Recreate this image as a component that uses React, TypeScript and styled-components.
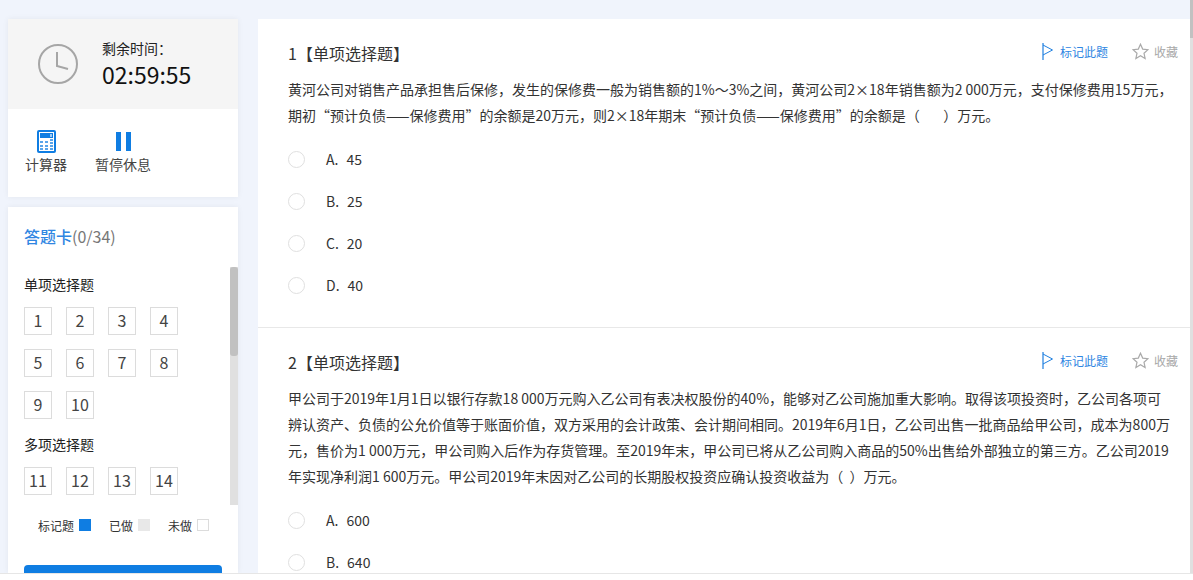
import React from "react";
import styled, { createGlobalStyle } from "styled-components";

const GlobalStyle = createGlobalStyle`
  html, body { margin: 0; padding: 0; height: 100%; overflow: hidden; }
  body {
    font-family: "Noto Sans CJK SC", "Noto Sans", sans-serif;
    font-size: 14px;
    color: #333;
  }
`;

const Page = styled.div`
  width: 1193px;
  height: 580px;
  display: flex;
  flex-direction: column;
  background: #fff;
  overflow: hidden;
`;

const Viewport = styled.div`
  height: 573px;
  flex: none;
  display: flex;
  background: #f0f4fc;
  overflow: hidden;
`;

const BottomLine = styled.div`
  flex: 1;
  border-top: 1px solid #e6e6e6;
`;

const Sidebar = styled.aside`
  width: 230px;
  flex: none;
  margin: 19px 0 0 8px;
  display: flex;
  flex-direction: column;
  gap: 10px;
`;

const Card = styled.section`
  background: #fff;
  box-shadow: 0 0 6px rgba(0, 0, 0, 0.06);
`;

const AnswerCard = styled(Card)`
  flex: 1;
  overflow: hidden;
`;

const TimerBox = styled.div`
  height: 90px;
  background: #f5f5f5;
  display: flex;
  align-items: center;
  padding-left: 30px;
  gap: 24px;
`;

const TimerText = styled.div`
  display: flex;
  flex-direction: column;
  color: #222;
  margin-top: -3px;
`;

const TimerLabel = styled.span`
  font-size: 14px;
  line-height: 22px;
`;

const TimerValue = styled.span`
  font-size: 23px;
  line-height: 30px;
  color: #111;
`;

const Tools = styled.div`
  height: 88px;
  display: flex;
  gap: 28px;
  padding: 21px 0 0 17px;
  box-sizing: border-box;
`;

const Tool = styled.div`
  display: flex;
  flex-direction: column;
  align-items: center;
  font-size: 14px;
  line-height: 22px;
  color: #444;
`;

const AnswerHead = styled.div`
  height: 60px;
  box-sizing: border-box;
  display: flex;
  align-items: center;
  padding: 0 16px 2px;
  font-size: 16px;
  color: #777;
`;

const AnswerTitle = styled.span`
  color: #2f86e2;
  font-weight: 500;
`;

const ScrollRow = styled.div`
  height: 238px;
  display: flex;
`;

const ScrollContent = styled.div`
  flex: 1;
  padding-left: 16px;
  overflow: hidden;
`;

const Track = styled.div`
  width: 8px;
  background: #e0e0e0;
`;

const Thumb = styled.div`
  height: 89px;
  background: #c1c1c1;
  border-radius: 3px;
`;

const GroupLabel = styled.div`
  height: 36px;
  line-height: 34px;
  margin-bottom: 4px;
  color: #222;
`;

const NumberGrid = styled.div`
  display: grid;
  grid-template-columns: repeat(4, 28px);
  gap: 14px;
  margin-bottom: 8px;
`;

const NumberBox = styled.div`
  width: 28px;
  height: 28px;
  box-sizing: border-box;
  border: 1px solid #dcdcdc;
  padding-bottom: 2px;
  display: flex;
  align-items: center;
  justify-content: center;
  font-size: 16px;
  color: #444;
`;

const Legend = styled.div`
  height: 40px;
  display: flex;
  align-items: center;
  gap: 18px;
  padding-left: 30px;
  font-size: 12px;
  color: #333;
`;

const LegendItem = styled.div`
  display: flex;
  align-items: center;
  gap: 5px;
`;

const Swatch = styled.i<{ $kind: "mark" | "done" | "todo" }>`
  width: 12px;
  height: 12px;
  box-sizing: border-box;
  background: ${(p) => (p.$kind === "mark" ? "#0f7de2" : p.$kind === "done" ? "#e8e8e8" : "#fff")};
  border: ${(p) => (p.$kind === "todo" ? "1px solid #dcdcdc" : "none")};
`;

const SubmitButton = styled.button`
  display: block;
  width: 198px;
  height: 40px;
  margin: 20px 0 0 16px;
  border: 0;
  border-radius: 4px;
  background: #0f7de2;
`;

const Main = styled.main`
  width: 932px;
  flex: none;
  margin: 19px 0 0 20px;
  background: #fff;
  overflow: hidden;
`;

const Question = styled.article`
  height: 284px;
  padding: 24px 12px 0 30px;
  border-bottom: 1px solid #e8e8e8;
  &:last-child { border-bottom: 0; }
`;

const QuestionHead = styled.header`
  height: 20px;
  display: flex;
  align-items: center;
  justify-content: space-between;
`;

const QuestionTitle = styled.h3`
  margin: 0;
  font-size: 16px;
  font-weight: 400;
  line-height: 20px;
  color: #333;
`;

const Actions = styled.div`
  display: flex;
  align-items: center;
  font-size: 12px;
  margin-top: -4px;
`;

const Action = styled.span<{ $active?: boolean }>`
  display: flex;
  align-items: center;
  gap: 5px;
  margin-left: 24px;
  color: ${(p) => (p.$active ? "#2f86e2" : "#a8a8a8")};
`;

const Stem = styled.p`
  margin: 13px 0 10px;
  font-size: 14px;
  line-height: 26px;
  color: #333;
  white-space: pre;
`;

const Options = styled.ul`
  list-style: none;
  margin: 0;
  padding: 0;
`;

const Option = styled.li`
  height: 42px;
  display: flex;
  align-items: center;
  color: #333;
`;

const Radio = styled.span`
  width: 17px;
  height: 17px;
  box-sizing: border-box;
  border: 1px solid #e0e0e0;
  border-radius: 50%;
  margin-right: 21px;
`;

const OptionKey = styled.span`
  margin-right: 8px;
`;

const PageTrack = styled.div`
  width: 3px;
  flex: none;
  background: #e0e0e0;
`;

const PageThumb = styled.div`
  height: 38px;
  background: #c1c1c1;
`;

const ClockIcon = () => (
  <svg width="40" height="40" viewBox="0 0 40 40" fill="none" stroke="#a6a6a6" strokeWidth="2">
    <circle cx="20" cy="20" r="19" />
    <path d="M19 8v14l11 3" />
  </svg>
);

const CalculatorIcon = () => (
  <svg width="19" height="23" viewBox="0 0 19 23">
    <rect x="0" y="0" width="19" height="23" rx="2" fill="#0f7de2" />
    <rect x="2" y="2" width="15" height="19" fill="#fff" />
    <rect x="3" y="3" width="13" height="5" fill="#0f7de2" />
    <rect x="13" y="4" width="2" height="3" fill="#9ccbf5" />
    <g fill="#5aa5ea">
      <rect x="3" y="11" width="3" height="2" />
      <rect x="8" y="11" width="3" height="2" />
      <rect x="13" y="9" width="3" height="2" />
      <rect x="13" y="12" width="3" height="2" />
      <rect x="3" y="15" width="3" height="2" />
      <rect x="8" y="15" width="3" height="2" />
      <rect x="13" y="15" width="3" height="2" />
      <rect x="3" y="18" width="3" height="2" />
      <rect x="8" y="18" width="3" height="2" />
      <rect x="13" y="18" width="3" height="2" />
    </g>
  </svg>
);

const PauseIcon = () => (
  <svg width="15" height="23" viewBox="0 0 15 23" fill="#0f7de2">
    <rect x="0" y="2" width="5" height="19" />
    <rect x="10" y="2" width="5" height="19" />
  </svg>
);

const FlagIcon = () => (
  <svg width="13" height="17" viewBox="0 0 13 17" fill="none" stroke="#1f7fe0">
    <path d="M1 0v17" strokeWidth="1.2" />
    <path d="M1 2l9.5 5L1 12" strokeWidth="1" />
  </svg>
);

const StarIcon = () => (
  <svg width="17" height="17" viewBox="0 0 17 17" fill="none" stroke="#aaa" strokeWidth="1.2">
    <path d="M8.5 1.2l2.2 4.9 5.2.6-3.9 3.5 1.1 5.3-4.6-2.7-4.6 2.7 1.1-5.3L1.1 6.7l5.2-.6z" />
  </svg>
);

const singleNumbers = [1, 2, 3, 4, 5, 6, 7, 8, 9, 10];
const multiNumbers = [11, 12, 13, 14];

const questions = [
  {
    no: 1,
    lines: [
      "黄河公司对销售产品承担售后保修，发生的保修费一般为销售额的1%～3%之间，黄河公司2×18年销售额为2 000万元，支付保修费用15万元，",
      "期初“预计负债——保修费用”的余额是20万元，则2×18年期末“预计负债——保修费用”的余额是（　   ）万元。",
    ],
    options: [
      ["A.", "45"],
      ["B.", "25"],
      ["C.", "20"],
      ["D.", "40"],
    ],
  },
  {
    no: 2,
    lines: [
      "甲公司于2019年1月1日以银行存款18 000万元购入乙公司有表决权股份的40%，能够对乙公司施加重大影响。取得该项投资时，乙公司各项可",
      "辨认资产、负债的公允价值等于账面价值，双方采用的会计政策、会计期间相同。2019年6月1日，乙公司出售一批商品给甲公司，成本为800万",
      "元，售价为1 000万元，甲公司购入后作为存货管理。至2019年末，甲公司已将从乙公司购入商品的50%出售给外部独立的第三方。乙公司2019",
      "年实现净利润1 600万元。甲公司2019年末因对乙公司的长期股权投资应确认投资收益为（  ）万元。",
    ],
    options: [
      ["A.", "600"],
      ["B.", "640"],
    ],
  },
];

export default function App() {
  return (
    <Page>
      <GlobalStyle />
      <Viewport>
        <Sidebar>
          <Card>
            <TimerBox>
              <ClockIcon />
              <TimerText>
                <TimerLabel>剩余时间：</TimerLabel>
                <TimerValue>02:59:55</TimerValue>
              </TimerText>
            </TimerBox>
            <Tools>
              <Tool>
                <CalculatorIcon />
                计算器
              </Tool>
              <Tool>
                <PauseIcon />
                暂停休息
              </Tool>
            </Tools>
          </Card>

          <AnswerCard>
            <AnswerHead>
              <AnswerTitle>答题卡</AnswerTitle>(0/34)
            </AnswerHead>
            <ScrollRow>
              <ScrollContent>
                <GroupLabel>单项选择题</GroupLabel>
                <NumberGrid>
                  {singleNumbers.map((n) => (
                    <NumberBox key={n}>{n}</NumberBox>
                  ))}
                </NumberGrid>
                <GroupLabel>多项选择题</GroupLabel>
                <NumberGrid>
                  {multiNumbers.map((n) => (
                    <NumberBox key={n}>{n}</NumberBox>
                  ))}
                </NumberGrid>
              </ScrollContent>
              <Track>
                <Thumb />
              </Track>
            </ScrollRow>
            <Legend>
              <LegendItem>
                标记题 <Swatch $kind="mark" />
              </LegendItem>
              <LegendItem>
                已做 <Swatch $kind="done" />
              </LegendItem>
              <LegendItem>
                未做 <Swatch $kind="todo" />
              </LegendItem>
            </Legend>
            <SubmitButton />
          </AnswerCard>
        </Sidebar>

        <Main>
          {questions.map((q) => (
            <Question key={q.no}>
              <QuestionHead>
                <QuestionTitle>{q.no}【单项选择题】</QuestionTitle>
                <Actions>
                  <Action $active>
                    <FlagIcon />
                    标记此题
                  </Action>
                  <Action>
                    <StarIcon />
                    收藏
                  </Action>
                </Actions>
              </QuestionHead>
              <Stem>
                {q.lines.map((line) => (
                  <React.Fragment key={line}>
                    {line}
                    <br />
                  </React.Fragment>
                ))}
              </Stem>
              <Options>
                {q.options.map(([key, value]) => (
                  <Option key={key}>
                    <Radio />
                    <OptionKey>{key}</OptionKey>
                    {value}
                  </Option>
                ))}
              </Options>
            </Question>
          ))}
        </Main>

        <PageTrack>
          <PageThumb />
        </PageTrack>
      </Viewport>
      <BottomLine />
    </Page>
  );
}
